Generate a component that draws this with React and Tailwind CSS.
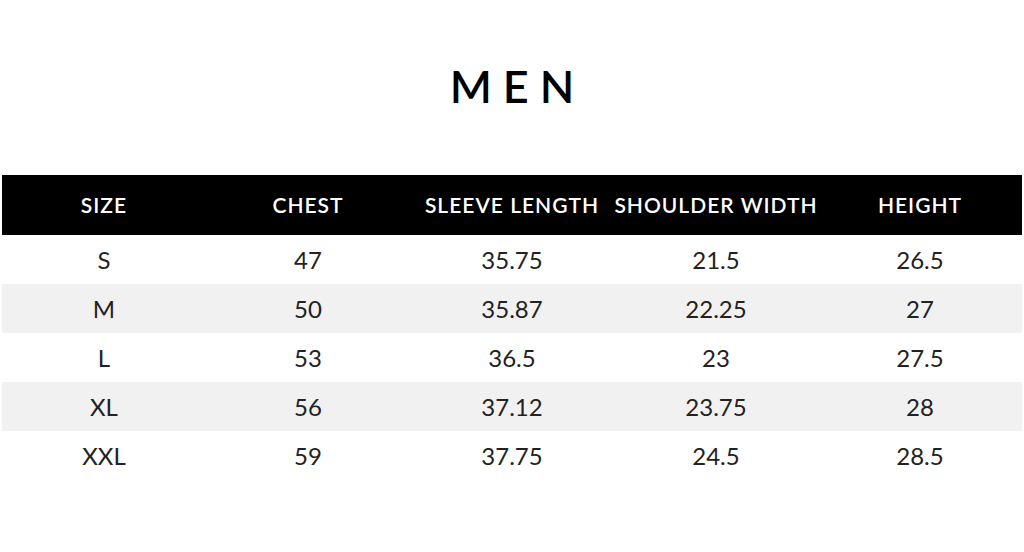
import React from 'react';

const columns = ['SIZE', 'CHEST', 'SLEEVE LENGTH', 'SHOULDER WIDTH', 'HEIGHT'];

const rows = [
    ['S', '47', '35.75', '21.5', '26.5'],
    ['M', '50', '35.87', '22.25', '27'],
    ['L', '53', '36.5', '23', '27.5'],
    ['XL', '56', '37.12', '23.75', '28'],
    ['XXL', '59', '37.75', '24.5', '28.5'],
];

const App = () => {
    return (
        <div
            className="w-[1024px] h-[552px] bg-white overflow-hidden"
            style={{ fontFamily: 'Lato, "Open Sans", sans-serif' }}
        >
            {/* Title */}
            <div className="pt-[58px] h-[175px] flex justify-center">
                <h1 className="text-[45px] leading-[56px] font-semibold tracking-[11px] pl-[11px] text-black">
                    MEN
                </h1>
            </div>

            {/* Size table */}
            <div className="ml-[2px] w-[1020px]">
                <div className="grid grid-cols-5 h-[60px] bg-black items-center">
                    {columns.map((col) => (
                        <div key={col} className="text-center text-white text-[21px] tracking-[1px] font-semibold whitespace-nowrap">
                            {col}
                        </div>
                    ))}
                </div>
                {rows.map((row, idx) => (
                    <div
                        key={row[0]}
                        className={`grid grid-cols-5 h-[49px] items-center ${idx % 2 === 1 ? 'bg-[#f1f1f1]' : 'bg-white'}`}
                    >
                        {row.map((cell, i) => (
                            <div key={i} className="text-center text-[#222222] text-[24px]">
                                {cell}
                            </div>
                        ))}
                    </div>
                ))}
            </div>
        </div>
    );
};

export default App;
